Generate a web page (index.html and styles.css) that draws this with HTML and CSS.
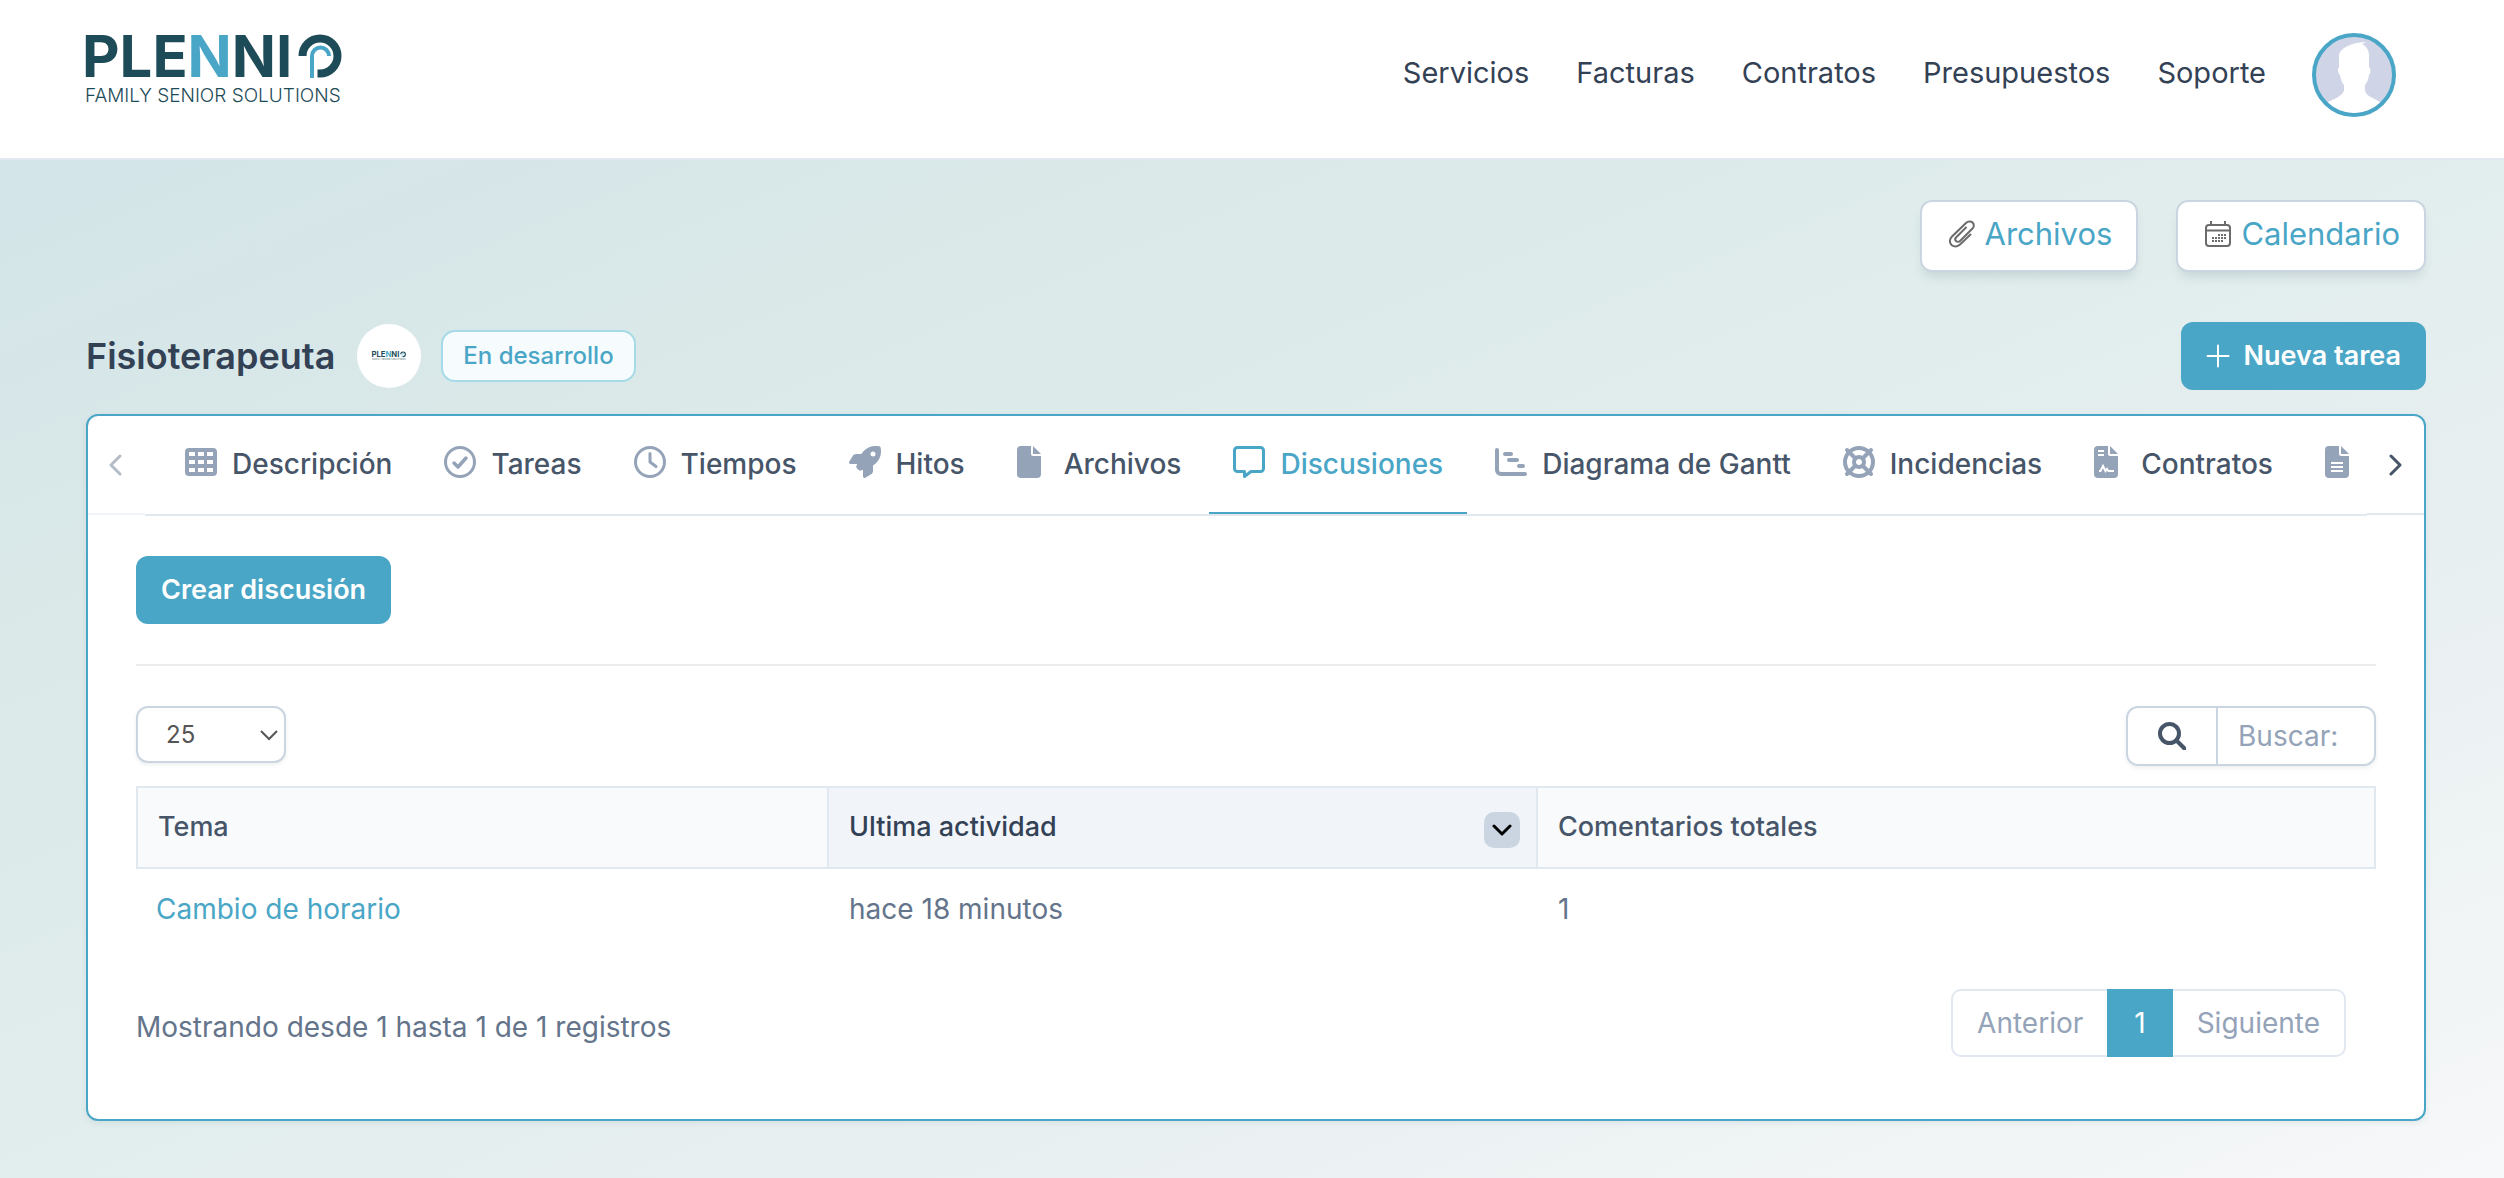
FILE: index.html
```html
<!DOCTYPE html>
<html lang="es">
<head>
<meta charset="utf-8">
<meta name="viewport" content="width=device-width, initial-scale=1">
<title>Fisioterapeuta</title>
<link rel="stylesheet" href="styles.css">
</head>
<body>
<header class="topbar">
  <a class="brand" href="#" aria-label="Plennio">
    <svg class="brand-logo" viewBox="0 0 256 72">
      <g id="plennio">
        <text class="logo-name" x="-4" y="44">PLE<tspan class="logo-accent">N</tspan>NI</text>
        <path class="logo-ring" d="M216.500 23a17.500 17.500 0 1 1 17.500 17.500h-2.500"/>
        <path class="logo-stem" d="M226 45v-22a8.500 8.500 0 0 1 17 0"/>
        <text class="logo-tag" x="-1" y="69">FAMILY SENIOR SOLUTIONS</text>
      </g>
    </svg>
  </a>
  <nav class="menu">
    <a href="#">Servicios</a>
    <a href="#">Facturas</a>
    <a href="#">Contratos</a>
    <a href="#">Presupuestos</a>
    <a href="#">Soporte</a>
  </nav>
  <a class="avatar" href="#" aria-label="Perfil">
    <svg viewBox="0 0 76 76">
      <path fill="#fff" d="M50 5C40 5 25 9 23 18V30C21 32 22 36 24 38 25 43 26 46 28 48V54C25 60 18 62 12 65V76H64V65C58 61 51 60 49 54V48C51 46 52 43 53 38 55 36 55 32 53 30V18C53 13 50 9 46 7z"/>
    </svg>
  </a>
</header>

<main class="page">
  <div class="quick">
    <a class="quick-link" href="#">
      <svg class="quick-icon" viewBox="0 0 28 28"><path d="M23 14 12 24.500c-2.500 2.500-6 2.500-8.500.5-2.500-2.500-2-6 .5-8.500L18 3c2-2 5-2 6.500-.5 2 2 1.500 4.500 0 6L12 21c-1 1-3 1-4 0s-1-2.500 0-3.500L18.500 7"/></svg>
      Archivos
    </a>
    <a class="quick-link" href="#">
      <svg class="quick-icon" viewBox="0 0 28 28"><rect x="2" y="5" width="24" height="21" rx="3"/><path d="M2 10.500h24M7 1v4M21 1v4"/><path class="dots" d="M14 15h8M8 18h14M8 21h11"/></svg>
      Calendario
    </a>
  </div>

  <div class="heading">
    <h1>Fisioterapeuta</h1>
    <span class="client"><svg viewBox="0 0 256 72"><use href="#plennio"/></svg></span>
    <span class="status">En desarrollo</span>
    <button class="btn btn-task" type="button">
      <svg viewBox="0 0 24 24"><path d="M12 1.500v21M1.500 12h21"/></svg>
      Nueva tarea
    </button>
  </div>

  <section class="card">
    <div class="tabs">
      <button class="scroll scroll-prev" type="button" aria-label="Anterior"><svg viewBox="0 0 14 22"><path d="M12 2 3 11l9 9"/></svg></button>
      <nav class="tablist">
        <a class="tab" href="#"><svg viewBox="0 0 32 32"><path fill-rule="evenodd" d="M4 2h24a4 4 0 0 1 4 4v20a4 4 0 0 1-4 4H4a4 4 0 0 1-4-4V6a4 4 0 0 1 4-4zM4 6v4h6V6zm9 0v4h6V6zm9 0v4h6V6zM4 14v4h6v-4zm9 0v4h6v-4zm9 0v4h6v-4zM4 22v4h6v-4zm9 0v4h6v-4zm9 0v4h6v-4z"/></svg>Descripción</a>
        <a class="tab" href="#"><svg class="line" viewBox="0 0 32 32"><circle cx="16" cy="16" r="14.500"/><path d="m10 17 4 4 8-9" stroke-width="3.500"/></svg>Tareas</a>
        <a class="tab" href="#"><svg class="line" viewBox="0 0 32 32"><circle cx="16" cy="16" r="14.500"/><path d="M16 7.500V16l6 4.500"/></svg>Tiempos</a>
        <a class="tab" href="#"><svg viewBox="0 0 512 512"><path d="M156.600 384.900L125.700 354c-8.500-8.500-11.500-20.800-7.700-32.200c3-8.900 7-20.500 11.800-33.800L24 288c-8.600 0-16.600-4.600-20.900-12.100s-4.200-16.700 .2-24.100l52.500-88.500c13-21.900 36.500-35.300 61.900-35.300l82.300 0c2.400-4 4.800-7.700 7.200-11.300C289.100-4.100 411.100-8.100 483.900 5.300c11.600 2.100 20.600 11.200 22.800 22.800c13.400 72.900 9.300 194.800-111.400 276.700c-3.500 2.400-7.300 4.800-11.300 7.200v82.300c0 25.400-13.400 49-35.300 61.900l-88.500 52.500c-7.400 4.400-16.600 4.500-24.100 .2s-12.100-12.200-12.100-20.900V380.800c-14.100 4.900-26.400 8.900-35.700 11.900c-11.200 3.600-23.400 .5-31.800-7.800zM384 168a40 40 0 1 0 0-80 40 40 0 1 0 0 80z"/></svg>Hitos</a>
        <a class="tab" href="#"><svg viewBox="0 0 32 32"><path d="M4 0h10v8a2 2 0 0 0 2 2h8v18a4 4 0 0 1-4 4H4a4 4 0 0 1-4-4V4a4 4 0 0 1 4-4zM16 0l8 8h-8z"/></svg>Archivos</a>
        <a class="tab active" href="#" aria-current="page"><svg class="line" viewBox="0 0 32 32"><path d="M4.500 1.500h23a3 3 0 0 1 3 3v18a3 3 0 0 1-3 3H18l-6.500 5v-5h-7a3 3 0 0 1-3-3v-18a3 3 0 0 1 3-3z"/></svg>Discusiones</a>
        <a class="tab" href="#"><svg class="line thick" viewBox="0 0 32 32"><path d="M2 4v20a4 4 0 0 0 4 4h24M10 8h6M14 14h8M24 20h4"/></svg>Diagrama de Gantt</a>
        <a class="tab" href="#"><svg class="line thick" viewBox="0 0 32 32"><circle cx="16" cy="16" r="14"/><circle cx="16" cy="16" r="5"/><path stroke-width="4" d="m4 4 8.500 8.500M28 4l-8.500 8.500M4 28l8.500-8.500M28 28l-8.500-8.500"/></svg>Incidencias</a>
        <a class="tab" href="#"><svg viewBox="0 0 32 32"><path d="M4 0h10v8a2 2 0 0 0 2 2h8v18a4 4 0 0 1-4 4H4a4 4 0 0 1-4-4V4a4 4 0 0 1 4-4zM16 0l8 8h-8z"/><path class="knock" d="M4 5h6M4 9h6M5 25h1.500l2.500-5 2.500 5 1.500-2 1.500 2H20"/></svg>Contratos</a>
        <a class="tab" href="#" aria-label="Presupuestos"><svg viewBox="0 0 32 32"><path d="M4 0h10v8a2 2 0 0 0 2 2h8v18a4 4 0 0 1-4 4H4a4 4 0 0 1-4-4V4a4 4 0 0 1 4-4zM16 0l8 8h-8z"/><path class="knock" d="M6 17h12M6 21h12M6 25h12"/></svg></a>
      </nav>
      <button class="scroll scroll-next" type="button" aria-label="Siguiente"><svg viewBox="0 0 14 22"><path d="m2 2 9 9-9 9"/></svg></button>
    </div>

    <div class="content">
      <button class="btn" type="button">Crear discusión</button>
      <hr>
      <div class="tools">
        <div class="length">
          <select aria-label="Registros por página"><option>25</option></select>
          <svg viewBox="0 0 20 12"><path d="m2 2 8 8 8-8"/></svg>
        </div>
        <label class="search">
          <svg viewBox="0 0 28 28"><circle cx="11.500" cy="11.500" r="9.500"/><path d="m18.500 18.500 8 8"/></svg>
          <input type="text" placeholder="Buscar:" aria-label="Buscar">
        </label>
      </div>

      <table>
        <thead>
          <tr>
            <th class="col-topic">Tema</th>
            <th class="col-activity sorted"><div class="sort">Ultima actividad<span class="chip"><svg viewBox="0 0 20 14"><path d="m2 3 8 8 8-8"/></svg></span></div></th>
            <th>Comentarios totales</th>
          </tr>
        </thead>
        <tbody>
          <tr>
            <td><a href="#">Cambio de horario</a></td>
            <td>hace 18 minutos</td>
            <td>1</td>
          </tr>
        </tbody>
      </table>

      <div class="foot">
        <p>Mostrando desde 1 hasta 1 de 1 registros</p>
        <nav class="pager">
          <button type="button">Anterior</button>
          <button class="current" type="button">1</button>
          <button type="button">Siguiente</button>
        </nav>
      </div>
    </div>
  </section>
</main>
</body>
</html>
```

FILE: styles.css
```css
:root {
  --accent: #4aa6c6;
  --ink: #334155;
  --slate: #475569;
  --muted: #64748b;
  --soft: #94a3b8;
  --line: #e2e8f0;
  --edge: #cbd5e1;
}

* { box-sizing: border-box; }

body {
  margin: 0;
  min-height: 100vh;
  display: flex;
  flex-direction: column;
  font: 400 28px/36px Inter, "Liberation Sans", sans-serif;
  color: var(--muted);
  background: #fff;
}

a { color: inherit; text-decoration: none; }
button, input, select { font: inherit; color: inherit; margin: 0; }
button { cursor: pointer; }
svg { display: block; flex: none; }

/* Logo */
.logo-name { font: 700 58px Inter, sans-serif; fill: #1e4b58; }
.logo-accent { fill: var(--accent); }
.logo-tag { font: 300 19px Inter, sans-serif; fill: #1e4b58; }
.logo-ring { fill: none; stroke: #1e4b58; stroke-width: 8; }
.logo-stem { fill: none; stroke: var(--accent); stroke-width: 4; }

/* Top bar */
.topbar {
  display: flex;
  align-items: center;
  padding: 33px 108px 41px 86px;
  background: #fff;
  border-bottom: 2px solid var(--line);
}
.brand { margin-right: auto; align-self: flex-start; }
.brand-logo { width: 256px; height: 72px; overflow: visible; }
.menu {
  display: flex;
  gap: 47px;
  padding-bottom: 4px;
  margin-right: 46px;
  font-size: 29px;
  color: var(--ink);
}
.avatar {
  width: 84px;
  height: 84px;
  border: 4px solid var(--accent);
  border-radius: 50%;
  background: #cfd5e6;
  overflow: hidden;
}

/* Page */
.page {
  flex: 1;
  padding: 40px 78px 56px 86px;
  background: linear-gradient(to bottom right, #d3e5e9, #dae8e8 22%, #e0edec 45%, #e6eef0 62%, #eef3f4 82%, #f7f8f9);
}
.quick { display: flex; justify-content: flex-end; gap: 38px; margin-bottom: 50px; }
.quick-link {
  display: flex;
  align-items: center;
  gap: 9px;
  padding: 14px 24px 18px 26px;
  border: 2px solid var(--edge);
  border-radius: 12px;
  background: #fff;
  box-shadow: 0 8px 12px -4px rgba(30, 60, 70, .14);
  font-size: 31px;
  color: var(--accent);
}
.quick-icon { width: 28px; height: 28px; fill: none; stroke: #6b6b6b; stroke-width: 2; }
.quick-icon .dots { stroke-dasharray: 2 1; }

.heading { display: flex; align-items: center; margin-bottom: 24px; }
.heading h1 { margin: 0 22px 0 0; font-size: 36px; font-weight: 600; color: var(--ink); }
.client {
  display: grid;
  place-items: center;
  width: 64px;
  height: 64px;
  margin-right: 20px;
  border-radius: 50%;
  background: #fff;
}
.client svg { width: 34px; height: 10px; overflow: visible; }
.status {
  padding: 6px 20px;
  border: 2px solid #a5dbe8;
  border-radius: 14px;
  background: #f6fbfe;
  font-size: 24px;
  font-weight: 500;
  color: var(--accent);
}

.btn {
  display: flex;
  align-items: center;
  gap: 14px;
  padding: 16px 25px;
  border: 0;
  border-radius: 12px;
  background: var(--accent);
  font-weight: 600;
  font-size: 27px;
  color: #fff;
}
.btn svg { width: 24px; height: 24px; fill: none; stroke: #fff; stroke-width: 2; stroke-linecap: round; }
.btn-task { margin-left: auto; }

/* Card and tabs */
.card {
  border: 2px solid var(--accent);
  border-radius: 12px;
  background: #fff;
  box-shadow: 0 2px 6px rgba(30, 60, 70, .08);
}
.tabs { display: flex; align-items: flex-start; }
.scroll {
  display: grid;
  place-items: center;
  flex: none;
  width: 57px;
  height: 99px;
  padding: 0;
  border: 0;
  border-bottom: 2px solid #f1f5f9;
  background: none;
}
.scroll svg { width: 14px; height: 22px; fill: none; stroke: #b4bcc8; stroke-width: 3; stroke-linecap: round; stroke-linejoin: round; }
.scroll-prev { padding-right: 4px; }
.scroll-next { border-color: var(--line); }
.scroll-next svg { stroke: var(--slate); }
.tablist {
  display: flex;
  flex: 1;
  gap: 4px;
  min-width: 0;
  padding-left: 16px;
  overflow: hidden;
  border-bottom: 2px solid var(--line);
}
.tab {
  display: flex;
  flex: none;
  align-items: flex-start;
  gap: 15px;
  padding: 30px 24px;
  border-bottom: 2px solid transparent;
  font-size: 28px;
  font-weight: 500;
  color: var(--slate);
}
.tab svg { width: 32px; height: 32px; fill: var(--soft); }
.tab .line { fill: none; stroke: var(--soft); stroke-width: 3; stroke-linecap: round; stroke-linejoin: round; }
.tab .thick { stroke-width: 4; }
.tab .knock { fill: none; stroke: #fff; stroke-width: 2; }
.tab.active { color: var(--accent); border-color: var(--accent); }
.tab.active .line { stroke: var(--accent); }

/* Discussions */
.content { padding: 40px 48px 62px; }
hr { margin: 40px 0; border: 0; border-top: 2px solid #ececee; }
.tools { display: flex; justify-content: space-between; align-items: flex-start; margin-bottom: 20px; }
.length { display: grid; grid-template-columns: 1fr 20px 7px; align-items: center; width: 150px; }
.length select {
  grid-area: 1 / 1 / 2 / 4;
  height: 57px;
  padding: 0 28px;
  appearance: none;
  border: 2px solid var(--edge);
  border-radius: 12px;
  background: #fff;
  box-shadow: 0 2px 4px rgba(30, 60, 70, .08);
  font-size: 24px;
  color: #555;
}
.length svg { grid-area: 1 / 2; width: 20px; height: 12px; fill: none; stroke: #555; stroke-width: 2; pointer-events: none; }
.search {
  display: flex;
  width: 250px;
  height: 60px;
  align-items: center;
  border: 2px solid var(--edge);
  border-radius: 12px;
  box-shadow: 0 2px 4px rgba(30, 60, 70, .08);
}
.search svg { width: 28px; height: 28px; margin: 0 30px; fill: none; stroke: var(--slate); stroke-width: 4; stroke-linecap: round; }
.search input {
  flex: 1;
  min-width: 0;
  height: 100%;
  padding: 0 20px;
  border: 0;
  border-left: 2px solid var(--edge);
  background: none;
}
.search input::placeholder { color: var(--soft); opacity: 1; }

table { width: 100%; table-layout: fixed; border-collapse: separate; border-spacing: 0; }
th {
  height: 83px;
  padding: 0 20px 2px;
  border: solid var(--line);
  border-width: 2px 0 2px 2px;
  background: #f8fafc;
  text-align: left;
  font-size: 27px;
  font-weight: 500;
  color: var(--slate);
}
th:last-child { border-right-width: 2px; }
.col-topic { width: 30.85%; }
.col-activity { width: 31.65%; }
.sorted { padding-right: 16px; background: #f1f5fa; color: var(--ink); }
.sort { display: flex; justify-content: space-between; align-items: center; }
.chip {
  display: grid;
  place-items: center;
  width: 36px;
  height: 36px;
  margin-top: 6px;
  border-radius: 10px;
  background: var(--edge);
}
.chip svg { width: 20px; height: 14px; fill: none; stroke: #000; stroke-width: 3; stroke-linecap: round; stroke-linejoin: round; }
td { height: 78px; padding: 2px 22px 0; }
td:first-child { padding-left: 20px; }
td a { color: var(--accent); }

.foot { display: flex; justify-content: space-between; align-items: center; margin-top: 42px; padding-right: 30px; }
.foot p { margin: 0; padding-top: 8px; }
.pager { display: flex; }
.pager button {
  padding: 14px 24px;
  border: 2px solid var(--line);
  border-width: 2px 0;
  background: #fff;
  color: var(--soft);
}
.pager button:first-child { border-left-width: 2px; border-radius: 10px 0 0 10px; }
.pager button:last-child { border-right-width: 2px; border-radius: 0 10px 10px 0; }
.pager .current { padding: 14px 27px; background: var(--accent); border-color: var(--accent); color: #fff; }
```
